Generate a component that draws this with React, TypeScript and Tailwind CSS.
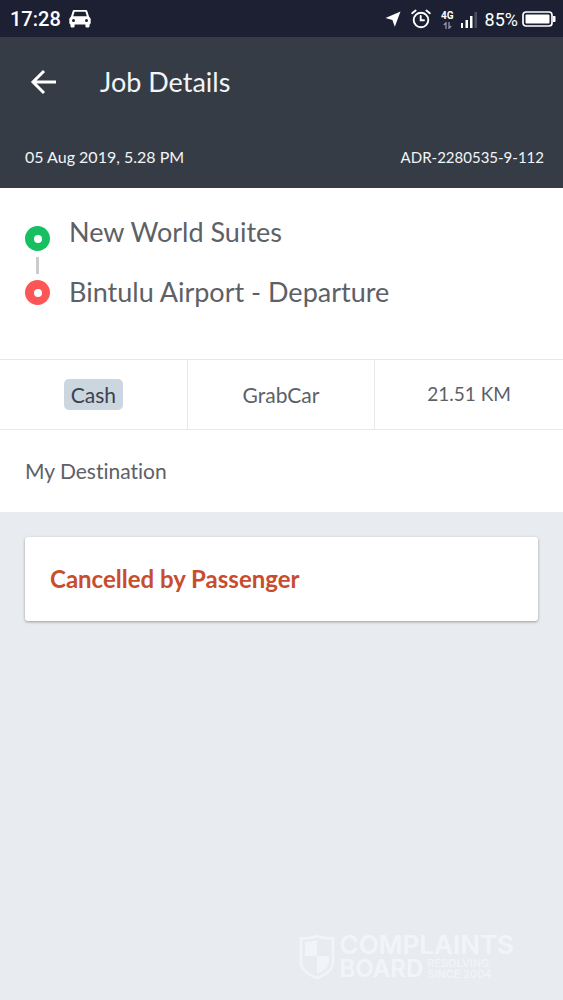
import { ReactNode } from "react";

const TRIP = {
  date: "05 Aug 2019, 5.28 PM",
  code: "ADR-2280535-9-112",
  pickup: "New World Suites",
  dropoff: "Bintulu Airport - Departure",
  payment: "Cash",
  service: "GrabCar",
  distance: "21.51 KM",
};

function CarIcon() {
  return (
    <svg width="22" height="18" viewBox="0 0 22 18" fill="#fff" aria-hidden="true">
      <path
        fillRule="evenodd"
        d="M5.2 0h11.6c.8 0 1.4.5 1.6 1.2L20 6.4l1.2 1.5c.3.4.5.8.5 1.3v3.600c0 .8-.5 1.400-1.200 1.600V16c0 .9-.7 1.600-1.600 1.600h-.9c-.9 0-1.600-.7-1.600-1.600v-1.500H5.600V16c0 .9-.7 1.600-1.600 1.600h-.9c-.9 0-1.600-.7-1.600-1.600v-1.600C.8 14.200.3 13.600.3 12.800V9.200c0-.5.2-.9.5-1.300L2 6.400l1.600-5.200C3.800.5 4.400 0 5.200 0ZM5.600 1.800 4.200 6.300h13.600l-1.400-4.500ZM4.500 9a1.500 1.500 0 1 0 0 3 1.500 1.500 0 0 0 0-3Zm13 0a1.500 1.500 0 1 0 0 3 1.500 1.500 0 0 0 0-3Z"
      />
    </svg>
  );
}

function LocationIcon() {
  return (
    <svg width="16" height="16" viewBox="0 0 16 16" fill="#fff" aria-hidden="true">
      <path d="M15.500.5 9.800 15.800 7.400 9 .5 7Z" />
    </svg>
  );
}

function AlarmIcon() {
  return (
    <svg width="20" height="20" viewBox="0 0 20 20" fill="none" stroke="#fff" strokeWidth="1.9" strokeLinecap="round" aria-hidden="true">
      <circle cx="10" cy="11" r="7.3" />
      <path d="M9.700 7v4.300H13M1.200 4.200 4.600 1.500M18.800 4.200l-3.400-2.700" />
    </svg>
  );
}

function DataArrows() {
  return (
    <svg width="9" height="7" viewBox="0 0 9 7" fill="none" stroke="#9a9cb0" strokeWidth="1.2" aria-hidden="true">
      <path d="M3 7V.8L.8 3M6 0v6.200L8.200 4" />
    </svg>
  );
}

function SignalIcon() {
  return (
    <svg width="18" height="17" viewBox="0 0 18 17" aria-hidden="true">
      <path fill="#fff" d="M1 12h2v5H1zM5.500 9H8v8H5.500zM10 5h2.500v12H10z" />
      <path fill="#4a4e64" d="M14.500 1H17v16h-2.500z" />
    </svg>
  );
}

function BatteryIcon() {
  return (
    <svg width="34" height="16" viewBox="0 0 34 16" aria-hidden="true">
      <rect x="1" y="1" width="29" height="14" rx="3" fill="none" stroke="#fff" strokeWidth="1.7" />
      <rect x="3.5" y="3.5" width="24" height="9" rx="1" fill="#fff" />
      <path fill="#fff" d="M31 5h1.500c.6 0 1 .4 1 1v4c0 .6-.4 1-1 1H31z" />
    </svg>
  );
}

function StatusBar() {
  return (
    <div className="flex h-[37px] items-center justify-between bg-[#1d2033] pt-px pr-[7px] pl-[10px] font-[Roboto,sans-serif] text-white">
      <div className="flex items-center gap-2">
        <span className="text-[20px] font-medium">17:28</span>
        <CarIcon />
      </div>
      <div className="flex items-center">
        <LocationIcon />
        <div className="ml-[10px]">
          <AlarmIcon />
        </div>
        <div className="ml-[10px] flex flex-col items-center">
          <span className="text-[10px] leading-[12px] font-bold">4G</span>
          <DataArrows />
        </div>
        <div className="ml-[6px]">
          <SignalIcon />
        </div>
        <span className="ml-[7px] text-[18px]">85%</span>
        <div className="ml-1">
          <BatteryIcon />
        </div>
      </div>
    </div>
  );
}

function Marker({ color }: { color: string }) {
  return (
    <span className={`flex size-[25px] items-center justify-center rounded-full ${color}`}>
      <span className="size-2 rounded-full bg-white" />
    </span>
  );
}

function Cell({ children }: { children: ReactNode }) {
  return <div className="flex items-center justify-center">{children}</div>;
}

function Watermark() {
  return (
    <div className="flex items-center gap-1 font-[Inter,sans-serif] font-semibold text-[#f2f5f7]">
      <svg width="36" height="46" viewBox="0 0 36 46" aria-hidden="true">
        <path
          fill="none"
          stroke="#f2f5f7"
          strokeWidth="2.5"
          d="M18 2C13 4 7 4.500 2 4.500V28c0 8 8 13 16 16 8-3 16-8 16-16V4.500C29 4.500 23 4 18 2Z"
        />
        <path fill="#f2f5f7" d="M6 8c4 0 8-.5 12-2v16H6zM18 22h12v6c0 5-5 9-12 12z" />
      </svg>
      <div>
        <div className="text-[26px] leading-[24px]">COMPLAINTS</div>
        <div className="flex items-center gap-1">
          <span className="text-[24px] leading-[24px]">BOARD</span>
          <div className="text-[11px] leading-[11px] font-medium whitespace-nowrap">
            <p>RESOLVING</p>
            <p>SINCE 2004</p>
          </div>
        </div>
      </div>
    </div>
  );
}

export default function App() {
  return (
    <div className="flex min-h-screen flex-col bg-[#e8ecf0] font-[Lato,sans-serif] text-[#5d6166] [font-variant-ligatures:none]">
      <StatusBar />

      <header className="bg-[#363c45] text-[#f2f5f8]">
        <div className="flex h-[90px] items-center gap-[42px] pl-[30px]">
          <button type="button" aria-label="Back">
            <svg width="28" height="26" viewBox="0 0 28 26" fill="none" stroke="#fff" strokeWidth="3" aria-hidden="true">
              <path d="M26 13H4M14 2 3 13l11 11" />
            </svg>
          </button>
          <h1 className="text-[27px]">Job Details</h1>
        </div>
        <div className="flex h-[61px] items-center justify-between pr-[19px] pb-px pl-[25px]">
          <span className="text-[16px]">{TRIP.date}</span>
          <span className="text-[15px]">{TRIP.code}</span>
        </div>
      </header>

      <main className="flex flex-1 flex-col">
        <section className="flex h-[171px] gap-[19px] bg-white pt-7 pl-[25px]">
          <div className="flex flex-col items-center pt-[10px]">
            <Marker color="bg-[#16c060]" />
            <span className="my-[6px] h-[17px] w-[3px] bg-[#c9cbcd]" />
            <Marker color="bg-[#fc5656]" />
          </div>
          <div className="flex flex-col gap-7 text-[27px] leading-[32px]">
            <p>{TRIP.pickup}</p>
            <p>{TRIP.dropoff}</p>
          </div>
        </section>

        <section className="grid h-[71px] grid-cols-3 divide-x divide-[#e4eaec] border-y border-[#e4eaec] bg-white text-[21px]">
          <Cell>
            <span className="rounded-[5px] bg-[#ccd6df] px-[7px] leading-[31px] text-[#39424e]">{TRIP.payment}</span>
          </Cell>
          <Cell>{TRIP.service}</Cell>
          <Cell>
            <span className="text-[19px]">{TRIP.distance}</span>
          </Cell>
        </section>

        <section className="flex h-[82px] items-center bg-white pl-[25px] text-[21px]">My Destination</section>

        <section className="mx-[25px] mt-[25px] flex h-[84px] items-center rounded-[3px] bg-white pl-[25px] text-[24px] font-bold text-[#c84d2e] shadow-[0_1px_3px_rgba(0,0,0,0.35)]">
          Cancelled by Passenger
        </section>

        <footer className="mt-auto flex justify-end pr-[49px] pb-[19px]">
          <Watermark />
        </footer>
      </main>
    </div>
  );
}
